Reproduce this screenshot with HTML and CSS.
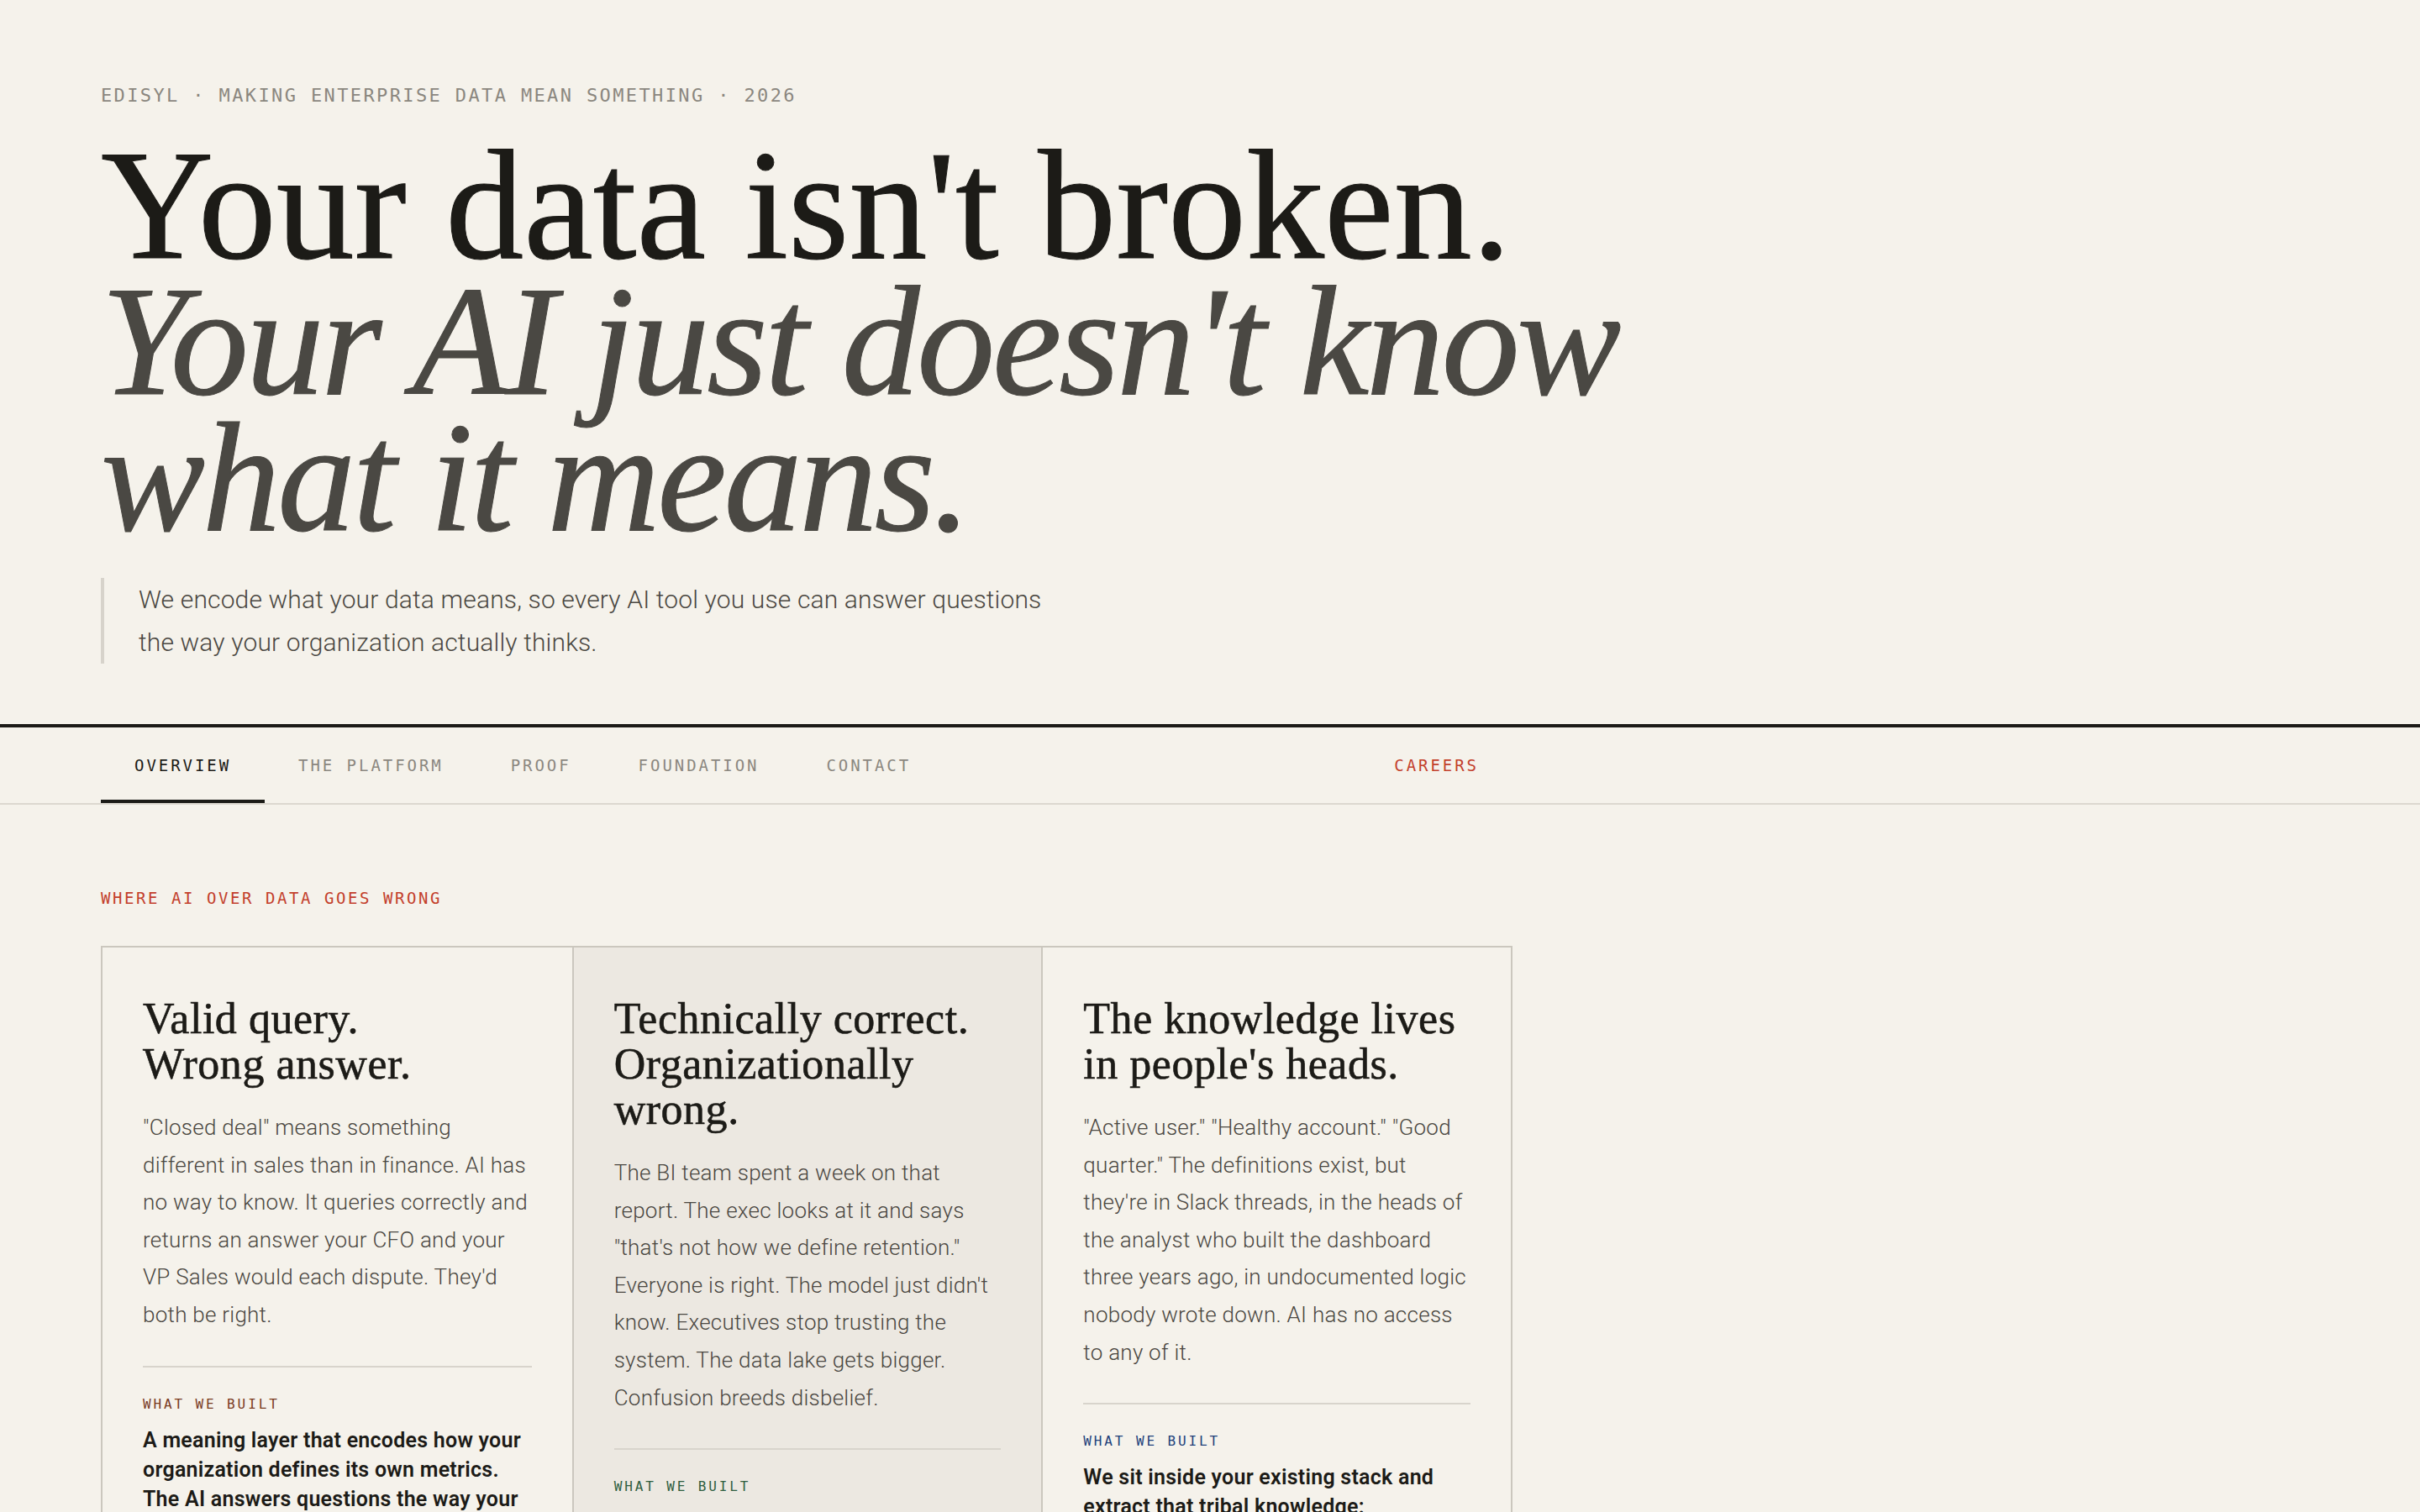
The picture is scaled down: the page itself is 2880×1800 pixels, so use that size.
FILE: index.html
```html
<!DOCTYPE html>
<html>
<head>
    <title>Edisyl - Making enterprise data mean something</title>
    <meta name="viewport" content="width=device-width, initial-scale=1.0">
    <link rel="stylesheet" href="styles.css">
</head>
<body>
    <header class="hero wrap">
        <p class="eyebrow">Edisyl · Making enterprise data mean something · 2026</p>
        <h1 class="hero-title">
            <span class="line">Your data isn't broken.</span>
            <em class="line">Your AI just doesn't know</em>
            <em class="line">what it means.</em>
        </h1>
        <p class="lead">We encode what your data means, so every AI tool you use can answer questions the way your organization actually thinks.</p>
    </header>

    <nav class="tabs">
        <div class="tabs-inner wrap">
            <a class="tab active" href="#overview">Overview</a>
            <a class="tab" href="#platform">The Platform</a>
            <a class="tab" href="#proof">Proof</a>
            <a class="tab" href="#foundation">Foundation</a>
            <a class="tab" href="#contact">Contact</a>
            <a class="tab careers" href="#careers">Careers</a>
        </div>
    </nav>

    <main class="section wrap" id="overview">
        <p class="section-label">Where AI over data goes wrong</p>

        <div class="problems">
            <article class="problem">
                <h2>Valid query.<br>Wrong answer.</h2>
                <p>"Closed deal" means something different in sales than in finance. AI has no way to know. It queries correctly and returns an answer your CFO and your VP Sales would each dispute. They'd both be right.</p>
                <div class="built">
                    <span class="built-label brown">What we built</span>
                    <p class="built-text">A meaning layer that encodes how your organization defines its own metrics. The AI answers questions the way your business actually talks about them.</p>
                </div>
            </article>

            <article class="problem shaded">
                <h2>Technically correct.<br>Organizationally wrong.</h2>
                <p>The BI team spent a week on that report. The exec looks at it and says "that's not how we define retention." Everyone is right. The model just didn't know. Executives stop trusting the system. The data lake gets bigger. Confusion breeds disbelief.</p>
                <div class="built">
                    <span class="built-label green">What we built</span>
                    <p class="built-text">Definitions your leadership signs off on, so every report starts from the same answer.</p>
                </div>
            </article>

            <article class="problem">
                <h2>The knowledge lives in people's heads.</h2>
                <p>"Active user." "Healthy account." "Good quarter." The definitions exist, but they're in Slack threads, in the heads of the analyst who built the dashboard three years ago, in undocumented logic nobody wrote down. AI has no access to any of it.</p>
                <div class="built">
                    <span class="built-label blue">What we built</span>
                    <p class="built-text">We sit inside your existing stack and extract that tribal knowledge: definitions, exceptions and the logic behind every number.</p>
                </div>
            </article>
        </div>
    </main>
</body>
</html>
```

FILE: styles.css
```css
body {
    margin: 0;
    background-color: #f5f2eb;
    color: #1c1b17;
    font-family: Roboto, "Liberation Sans", sans-serif;
}

.wrap {
    max-width: 1680px;
    padding: 0 120px;
}

/* hero */
.hero {
    padding-top: 98px;
    padding-bottom: 72px;
}
.eyebrow {
    margin: 0;
    font: 400 22px/31px "DejaVu Sans Mono", monospace;
    letter-spacing: 0.108em;
    text-transform: uppercase;
    color: #8b877f;
}
.hero-title {
    margin: 34px 0 0;
    font: 400 186px/162px "Liberation Serif", serif;
    white-space: nowrap;
    color: #1c1b17;
    -webkit-text-stroke: 1px #1c1b17;
}
.hero-title .line {display: block}
.hero-title em {
    color: #4a4843;
    letter-spacing: -0.018em;
    -webkit-text-stroke: 1px #4a4843;
}
.lead {
    margin: 39px 0 0;
    max-width: 1100px;
    padding-left: 41px;
    border-left: 4px solid #d7d3cb;
    font-size: 30px;
    font-weight: 300;
    line-height: 51px;
    letter-spacing: 0.005em;
    color: #4a4741;
}

/* tabs */
.tabs {
    border-top: 4px solid #1c1b17;
    border-bottom: 2px solid #dcd8cf;
}
.tabs-inner {
    display: flex;
}
.tab {
    display: flex;
    align-items: center;
    height: 90px;
    box-sizing: border-box;
    padding: 4px 40px 0;
    border-bottom: 4px solid transparent;
    font: 400 19px "DejaVu Sans Mono", monospace;
    letter-spacing: 0.155em;
    text-transform: uppercase;
    text-decoration: none;
    color: #8b877f;
}
.tab.active {
    color: #1c1b17;
    border-bottom-color: #1c1b17;
}
.tab.careers {
    margin-left: auto;
    color: #c3402c;
}

/* problems */
.section {
    padding-top: 98px;
}
.section-label {
    margin: 0 0 43px;
    font: 400 19px/27px "DejaVu Sans Mono", monospace;
    letter-spacing: 0.135em;
    text-transform: uppercase;
    color: #c3402c;
}
.problems {
    display: grid;
    grid-template-columns: repeat(3, 1fr);
    border: 2px solid #cbc7be;
}
.problem {
    padding: 58px 48px 60px;
}
.problem + .problem {border-left: 2px solid #cbc7be}
.problem.shaded {background-color: #ece8e1}

.problem h2 {
    margin: 0 0 26px;
    font: 400 52px/54px "Liberation Serif", serif;
    letter-spacing: 0.01em;
    color: #1c1b17;
    -webkit-text-stroke: 0.6px #1c1b17;
}
.problem p {
    margin: 0;
    font-size: 26px;
    font-weight: 300;
    line-height: 44.6px;
    letter-spacing: 0.01em;
    color: #4a4741;
}

.built {
    margin-top: 38px;
    padding-top: 33px;
    border-top: 2px solid #d8d4cc;
}
.built-label {
    display: block;
    font: 400 16px/22px "DejaVu Sans Mono", monospace;
    letter-spacing: 0.18em;
    text-transform: uppercase;
}
.brown {color: #7a3b1f}
.green {color: #2f5e3f}
.blue {color: #22417a}

.problem .built-text {
    margin-top: 14px;
    font-size: 25px;
    font-weight: 600;
    line-height: 35px;
    letter-spacing: 0.01em;
    color: #1c1b17;
}
```
